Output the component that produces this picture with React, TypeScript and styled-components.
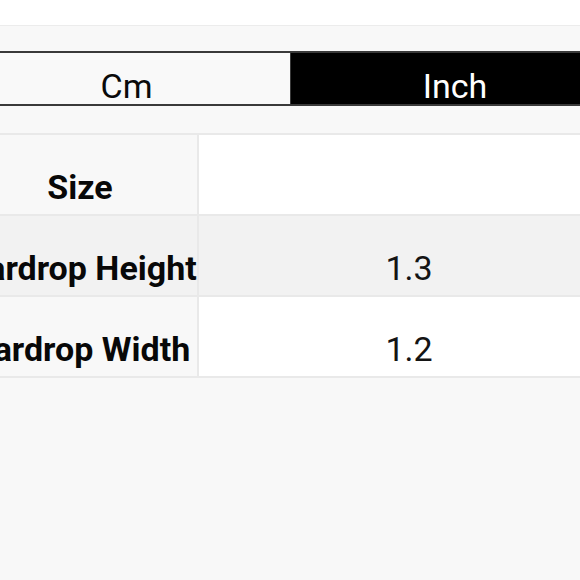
import React, { useState } from 'react'
import styled, { createGlobalStyle } from 'styled-components'

const GlobalStyle = createGlobalStyle`
  html, body {
    margin: 0;
    padding: 0;
    background: #f8f8f8;
    font-family: Roboto, 'Liberation Sans', sans-serif;
    overflow: hidden;
  }
`

const TopBar = styled.div`
  height: 25px;
  background: #ffffff;
  border-bottom: 1px solid #ececec;
`

const Content = styled.div`
  margin-left: -37px;
  width: 656px;
  padding-top: 25px;
`

const UnitToggle = styled.div`
  display: grid;
  grid-template-columns: 1fr 1fr;
  border-top: 2px solid #3a3a3a;
  border-bottom: 2px solid #3a3a3a;
`

const UnitButton = styled.button<{ active: boolean }>`
  box-sizing: border-box;
  height: 51px;
  margin: 0;
  padding: 15px 0 0;
  border: none;
  border-right: ${({ active }) => (active ? 'none' : '1px solid #3a3a3a')};
  background: ${({ active }) => (active ? '#000000' : '#f9f9f9')};
  color: ${({ active }) => (active ? '#ffffff' : '#0a0a0a')};
  font-family: Roboto, 'Liberation Sans', sans-serif;
  font-size: 34px;
  line-height: 36px;
  text-align: center;
  overflow: visible;
  cursor: pointer;
`

const SizeTable = styled.table`
  margin-top: 27px;
  width: 656px;
  border-collapse: collapse;
  table-layout: fixed;
`

const Row = styled.tr<{ striped: boolean }>`
  background: ${({ striped }) => (striped ? '#f2f2f2' : 'transparent')};
`

const LabelCell = styled.th<{ striped: boolean; heading: boolean }>`
  width: 234px;
  padding: 32px ${({ heading }) => (heading ? '0' : '14px')} 6px 0;
  border: 2px solid #e9e9e9;
  border-left: none;
  background: ${({ striped }) => (striped ? '#f2f2f2' : '#f8f8f8')};
  font-size: 34px;
  font-weight: 700;
  color: #080808;
  line-height: 41px;
`

const LabelText = styled.span`
  display: flex;
  justify-content: center;
  white-space: nowrap;
`

const ValueCell = styled.td<{ striped: boolean }>`
  padding: 32px 0 6px;
  border: 2px solid #e9e9e9;
  border-right: none;
  background: ${({ striped }) => (striped ? '#f2f2f2' : '#ffffff')};
  font-size: 34px;
  color: #141414;
  text-align: center;
  line-height: 41px;
`

const rows = [
  { label: 'Size', cm: '', inch: '' },
  { label: 'Teardrop Height', cm: '3.3', inch: '1.3' },
  { label: 'Teardrop Width', cm: '3', inch: '1.2' },
]

const App = () => {
  const [unit, setUnit] = useState<'cm' | 'inch'>('inch')

  return (
    <>
      <GlobalStyle />
      <TopBar />
      <Content>
        <UnitToggle>
          <UnitButton active={unit === 'cm'} onClick={() => setUnit('cm')}>
            Cm
          </UnitButton>
          <UnitButton active={unit === 'inch'} onClick={() => setUnit('inch')}>
            Inch
          </UnitButton>
        </UnitToggle>

        <SizeTable>
          <tbody>
            {rows.map((row, i) => (
              <Row key={row.label} striped={i % 2 === 1}>
                <LabelCell striped={i % 2 === 1} heading={i === 0}>
                  <LabelText>{row.label}</LabelText>
                </LabelCell>
                <ValueCell striped={i % 2 === 1}>{unit === 'inch' ? row.inch : row.cm}</ValueCell>
              </Row>
            ))}
          </tbody>
        </SizeTable>
      </Content>
    </>
  )
}

export default App
